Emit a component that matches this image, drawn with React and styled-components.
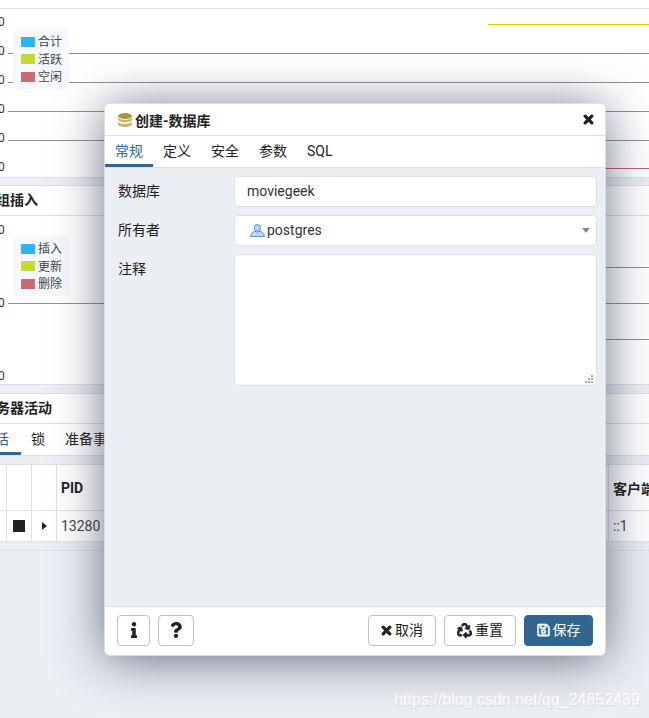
import React from "react";
import styled, { createGlobalStyle } from "styled-components";
import { FaInfo, FaQuestion, FaRecycle, FaRegSave } from "react-icons/fa";

const Global = createGlobalStyle`
  html, body { margin: 0; padding: 0; height: 100%; overflow: hidden; background: #ebeef3; }
  * { box-sizing: border-box; }
  body { font-family: Roboto, "Noto Sans CJK SC", sans-serif; font-size: 14px; color: #222; }
`;

const Page = styled.div`
  position: relative;
  width: 649px;
  height: 718px;
  overflow: hidden;
  background: #ebeef3;
`;
const TopStrip = styled.div`
  height: 8px;
  background: #fff;
`;
const Panel = styled.section`
  background: #fff;
  border-top: 1px solid #dde0e6;
  border-bottom: 1px solid #dde0e6;
  margin-bottom: ${(p) => p.$gap || 0}px;
  overflow: hidden;
`;
const PanelTitle = styled.h3`
  margin: 0 0 0 -18px;
  height: 29px;
  line-height: 28px;
  font-size: 14px;
  font-weight: 700;
  color: #222;
  white-space: nowrap;
`;
const Rule = styled.div`
  height: 1px;
  background: #dde0e6;
`;
const ChartBox = styled.div`
  position: relative;
  height: ${(p) => p.$h}px;
`;
const ChartSvg = styled.svg`
  display: block;
  width: 649px;
  height: 100%;
`;
const AxisLabel = styled.text`
  font-family: Roboto, sans-serif;
  font-size: 12px;
  fill: #333;
`;
const Legend = styled.div`
  position: absolute;
  left: 13px;
  top: ${(p) => p.$top}px;
  width: 56px;
  height: 60px;
  padding: 4px 0 0 8px;
  background: #f5f9ff;
  border-radius: 4px;
  display: flex;
  flex-direction: column;
`;
const LegendRow = styled.div`
  height: 17.5px;
  padding-bottom: 2px;
  display: flex;
  align-items: center;
  gap: 3px;
  font-size: 12px;
  color: #444;
`;
const Swatch = styled.span`
  width: 14px;
  height: 10px;
  margin-top: 2px;
  background: ${(p) => p.$c};
`;
const TabBar = styled.div`
  display: flex;
  height: ${(p) => p.$h}px;
  margin-left: ${(p) => p.$offset || 0}px;
  white-space: nowrap;
`;
const Tab = styled.div`
  padding: 2px ${(p) => p.$pr || 10}px 0 10px;
  display: flex;
  align-items: center;
  line-height: 20px;
  font-size: 14px;
  color: ${(p) => (p.$active ? "#326690" : "#222")};
  border-bottom: 3px solid ${(p) => (p.$active ? "#326690" : "transparent")};
`;
const Table = styled.div`
  margin-top: 8px;
  background: #fff;
  border-top: 1px solid #dde0e6;
  border-bottom: 1px solid #dde0e6;
  display: grid;
  grid-template-columns: 7px 25px 25px 552px 1fr;
  grid-template-rows: 46px 30px;
  overflow: hidden;
`;
const Cell = styled.div`
  border-right: 1px solid #dde0e6;
  border-bottom: ${(p) => (p.$last ? "0" : "1px solid #dde0e6")};
  padding-left: 4px;
  display: flex;
  align-items: center;
  justify-content: ${(p) => (p.$center ? "center" : "flex-start")};
  font-weight: ${(p) => (p.$head ? 700 : 400)};
  color: ${(p) => (p.$head ? "#222" : "#444")};
  white-space: nowrap;
`;
const StopMark = styled.span`
  width: 12px;
  height: 12px;
  margin-left: -4px;
  background: #222;
`;
const ExpandMark = styled.span`
  margin-left: -4px;
  border-left: 5px solid #222;
  border-top: 4.5px solid transparent;
  border-bottom: 4.5px solid transparent;
`;
const Closing = styled.div`
  margin-top: 8px;
  border-top: 1px solid #dde0e6;
`;

const Dialog = styled.div`
  position: absolute;
  left: 105px;
  top: 104px;
  width: 500px;
  height: 551px;
  background: #ebeef3;
  border-radius: 5px;
  overflow: hidden;
  display: flex;
  flex-direction: column;
  box-shadow: 0 0 0 1px rgba(222, 226, 234, 0.9), 0 4px 50px rgba(40, 50, 80, 0.7);
`;
const DialogHead = styled.header`
  height: 32px;
  flex: none;
  background: #fff;
  border-bottom: 1px solid #dde0e6;
  display: flex;
  align-items: center;
  padding: 0 11px 0 13px;
  font-weight: 700;
  font-size: 14px;
`;
const HeadTitle = styled.span`
  flex: 1;
  margin-left: 3px;
  color: #222;
`;
const DbIcon = styled.svg`
  width: 14px;
  height: 14px;
`;
const XIcon = styled.svg`
  width: ${(p) => p.$s}px;
  height: ${(p) => p.$s}px;
`;
const DialogTabs = styled.div`
  flex: none;
  background: #fff;
  border-bottom: 1px solid #dde0e6;
`;
const DialogBody = styled.div`
  flex: 1;
  padding: 8px 8px 0 13px;
  display: flex;
  flex-direction: column;
  gap: 8px;
`;
const FormRow = styled.div`
  display: grid;
  grid-template-columns: 116px 1fr;
  align-items: start;
`;
const FieldLabel = styled.label`
  line-height: 30px;
  font-size: 14px;
  color: #222;
`;
const Field = styled.div`
  position: relative;
  height: ${(p) => p.$h}px;
  background: #fff;
  border: 1px solid #dde0e6;
  border-radius: 4px;
  padding: 0 0 1px 12px;
  display: flex;
  align-items: center;
  color: #333;
  font-size: 14px;
`;
const UserIcon = styled.svg`
  width: 15px;
  height: 13px;
  margin: 0 2px 0 3px;
`;
const Caret = styled.span`
  position: absolute;
  right: 6px;
  top: 12px;
  border-left: 4px solid transparent;
  border-right: 4px solid transparent;
  border-top: 5px solid #888;
`;
const Grip = styled.svg`
  position: absolute;
  right: 2px;
  bottom: 1px;
  width: 9px;
  height: 9px;
`;
const DialogFoot = styled.footer`
  flex: none;
  height: 49px;
  background: #fff;
  border-top: 1px solid #dde0e6;
  display: flex;
  align-items: flex-start;
  padding: 8px 12px 0;
  gap: 8px;
`;
const Spacer = styled.div`
  flex: 1;
`;
const Btn = styled.button`
  height: 31px;
  width: ${(p) => p.$w}px;
  padding: 0 0 1px;
  font: inherit;
  font-size: 14px;
  line-height: 20px;
  color: ${(p) => (p.$primary ? "#fff" : "#222")};
  background: ${(p) => (p.$primary ? "#326690" : "#fff")};
  border: 1px solid ${(p) => (p.$primary ? "#326690" : "#bac1cd")};
  border-radius: 4px;
  display: inline-flex;
  align-items: center;
  justify-content: center;
  gap: 3px;
`;
const RecycleIcon = styled(FaRecycle)`
  width: 15px;
  height: 15px;
  color: #222;
  stroke: currentColor;
  stroke-width: 30px;
`;
const SaveIcon = styled(FaRegSave)`
  width: 13px;
  height: 14px;
  color: #fff;
  stroke: currentColor;
  stroke-width: 20px;
`;
const BigIconBtn = styled(Btn)`
  svg { width: 14px; height: 16px; color: #222; }
`;
const Watermark = styled.div`
  position: absolute;
  right: 9px;
  bottom: 9px;
  font-family: "Liberation Sans", sans-serif;
  font-size: 16px;
  line-height: 18px;
  color: rgba(255, 255, 255, 0.65);
  text-shadow: 0 0 2px rgba(255, 255, 255, 0.8), 1px 1px 1px rgba(170, 175, 185, 0.35);
  white-space: nowrap;
`;

const H = ({ y, from = 8, color = "#8f8f8f" }) => (
  <line x1={from} x2="649" y1={y + 0.5} y2={y + 0.5} stroke={color} strokeWidth="1" />
);
const Cross = () => (
  <XIcon $s={11} viewBox="0 0 10 10">
    <path d="M2 2L8 8M8 2L2 8" stroke="#222" strokeWidth="3" strokeLinecap="round" fill="none" />
  </XIcon>
);

export default function App() {
  return (
    <Page>
      <Global />
      <TopStrip />
      <Panel $gap={7}>
        <ChartBox $h={168}>
          <ChartSvg viewBox="0 0 649 168">
            {[17, 46, 75, 104, 133, 162].map((y) => (
              <AxisLabel key={y} x="-2" y={y}>0</AxisLabel>
            ))}
            <line x1="488" x2="649" y1="15.5" y2="15.5" stroke="#c8d600" />
            <H y={44} />
            <H y={73} />
            <H y={102} />
            <H y={131} />
            <H y={159} from={500} color="#ca5b63" />
          </ChartSvg>
          <Legend $top={20}>
            <LegendRow><Swatch $c="#2cb6f6" />合计</LegendRow>
            <LegendRow><Swatch $c="#c6d92e" />活跃</LegendRow>
            <LegendRow><Swatch $c="#ca6b73" />空闲</LegendRow>
          </Legend>
        </ChartBox>
      </Panel>
      <Panel $gap={8}>
        <PanelTitle>元组插入</PanelTitle>
        <Rule />
        <ChartBox $h={168}>
          <ChartSvg viewBox="0 0 649 168">
            {[18, 91, 164].map((y) => (
              <AxisLabel key={y} x="-2" y={y}>0</AxisLabel>
            ))}
            <H y={51} from={500} />
            <H y={87} />
            <H y={123} from={500} />
          </ChartSvg>
          <Legend $top={20}>
            <LegendRow><Swatch $c="#2cb6f6" />插入</LegendRow>
            <LegendRow><Swatch $c="#c6d92e" />更新</LegendRow>
            <LegendRow><Swatch $c="#ca6b73" />删除</LegendRow>
          </Legend>
        </ChartBox>
      </Panel>
      <Panel>
        <PanelTitle>服务器活动</PanelTitle>
        <Rule />
        <TabBar $h={31} $offset={-29}>
          <Tab $active $pr={12}>会话</Tab>
          <Tab>锁</Tab>
          <Tab>准备事务</Tab>
        </TabBar>
      </Panel>
      <Table>
        <Cell $head /><Cell $head /><Cell $head /><Cell $head>PID</Cell><Cell $head>客户端</Cell>
        <Cell $last /><Cell $last $center><StopMark /></Cell><Cell $last $center><ExpandMark /></Cell><Cell $last>13280</Cell><Cell $last>::1</Cell>
      </Table>
      <Closing />

      <Dialog>
        <DialogHead>
          <DbIcon viewBox="0 0 14 14">
            <ellipse cx="7" cy="3" rx="7" ry="3" fill="#ae9633" />
            <path d="M0 4.6 C1.2 6.3 4 6.9 7 6.9 C10 6.9 12.8 6.3 14 4.6 V6.6 C14 8.2 10.5 9.4 7 9.4 C3.5 9.4 0 8.2 0 6.6 Z" fill="#c6b56b" />
            <path d="M0 8.8 C1.2 10.5 4 11 7 11 C10 11 12.8 10.5 14 8.8 V11 C14 12.7 10.5 14 7 14 C3.5 14 0 12.7 0 11 Z" fill="#c6b56b" />
          </DbIcon>
          <HeadTitle>创建-数据库</HeadTitle>
          <Cross />
        </DialogHead>
        <DialogTabs>
          <TabBar $h={31}>
            <Tab $active>常规</Tab>
            <Tab>定义</Tab>
            <Tab>安全</Tab>
            <Tab>参数</Tab>
            <Tab>SQL</Tab>
          </TabBar>
        </DialogTabs>
        <DialogBody>
          <FormRow>
            <FieldLabel>数据库</FieldLabel>
            <Field $h={31}>moviegeek</Field>
          </FormRow>
          <FormRow>
            <FieldLabel>所有者</FieldLabel>
            <Field $h={31}>
              <UserIcon viewBox="0 0 15 13">
                <path d="M0.6 12.5 C0.9 9.4 2.8 7.9 5 7.2 C6.4 8.2 8.6 8.2 10 7.2 C12.2 7.9 14.1 9.4 14.4 12.5 Z" fill="#bcd8f3" stroke="#5a93d4" />
                <circle cx="7.5" cy="3.8" r="3.2" fill="#bcd8f3" stroke="#5a93d4" />
              </UserIcon>
              postgres
              <Caret />
            </Field>
          </FormRow>
          <FormRow>
            <FieldLabel>注释</FieldLabel>
            <Field $h={132}>
              <Grip viewBox="0 0 9 9">
                <g fill="#a8a8a8">
                  <rect x="6" y="0" width="2" height="2" />
                  <rect x="3" y="3" width="2" height="2" />
                  <rect x="6" y="3" width="2" height="2" />
                  <rect x="0" y="6" width="2" height="2" />
                  <rect x="3" y="6" width="2" height="2" />
                  <rect x="6" y="6" width="2" height="2" />
                </g>
              </Grip>
            </Field>
          </FormRow>
        </DialogBody>
        <DialogFoot>
          <BigIconBtn $w={33}><FaInfo /></BigIconBtn>
          <BigIconBtn $w={36}><FaQuestion /></BigIconBtn>
          <Spacer />
          <Btn $w={68}><Cross />取消</Btn>
          <Btn $w={72}><RecycleIcon />重置</Btn>
          <Btn $w={69} $primary><SaveIcon />保存</Btn>
        </DialogFoot>
      </Dialog>
      <Watermark>https://blog.csdn.net/qq_24852439</Watermark>
    </Page>
  );
}
